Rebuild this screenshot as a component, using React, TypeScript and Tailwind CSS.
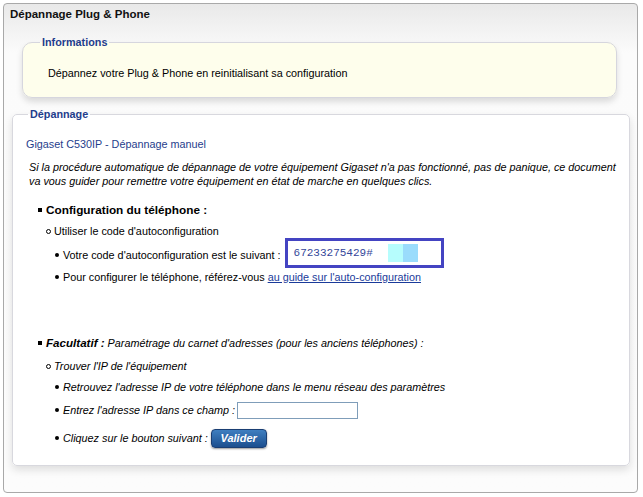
import React from "react";

export default function App() {
  return (
    <div className="w-[643px] h-[497px] bg-white pt-[3px] pl-[3px] font-['Liberation_Sans',Arial,sans-serif] text-[10.8px] text-black">
      <div className="w-[635px] h-[490px] rounded-[4px] border border-[#a9a9a9] bg-gradient-to-b from-[#e9e9e9] via-[#fbfbfb] via-[10%] to-[#fcfcfc]">
        <div className="h-[20px] pl-[6px] leading-[20px] text-[11.5px] font-bold text-[#111]">Dépannage Plug &amp; Phone</div>

        <fieldset className="ml-[18px] mt-[11px] w-[595px] rounded-[10px] border border-[#d6d6de] bg-[#fefeec] shadow-[0_4px_6px_rgba(0,0,0,0.13)]">
          <legend className="ml-[17px] px-[2px] h-[14px] leading-[14px] font-bold text-[#1f3d8c]">Informations</legend>
          <div className="pt-[17px] pb-[17px] pl-[25px] h-[48px] leading-[14px]">
            Dépannez votre Plug &amp; Phone en reinitialisant sa configuration
          </div>
        </fieldset>

        <fieldset className="ml-[8px] mt-[9px] w-[618px] h-[359px] rounded-[5px] border border-[#d8d8de] bg-white shadow-[0_4px_8px_rgba(0,0,0,0.12)]">
          <legend className="ml-[15px] px-[2px] h-[14px] leading-[14px] font-bold text-[#1f3d8c]">Dépannage</legend>
          <div className="pl-[13px] pt-[16px]">
            <div className="h-[14px] leading-[14px] text-[#1f3d8c]">Gigaset C530IP - Dépannage manuel</div>
            <p className="mt-[9px] pl-[3px] pr-[2px] italic leading-[14px]">
              Si la procédure automatique de dépannage de votre équipement Gigaset n'a pas fonctionné, pas de panique, ce document va vous guider pour remettre votre équipement en état de marche en quelques clics.
            </p>

            <div className="mt-[15px] pl-[12px]">
              <div className="flex h-[14px] items-center leading-[14px]">
                <span className="mr-[4px] inline-block h-[4px] w-[4px] bg-black" />
                <span className="text-[11.8px] font-bold">Configuration du téléphone :</span>
              </div>
              <div className="mt-[7px] flex h-[14px] items-center pl-[8px] leading-[14px]">
                <span className="mr-[3px] inline-block h-[5px] w-[5px] rounded-full border border-black" />
                <span>Utiliser le code d'autoconfiguration</span>
              </div>
              <div className="mt-[2px] flex h-[30px] items-center pl-[17px]">
                <span className="mr-[4px] inline-block h-[4px] w-[4px] rounded-full bg-black" />
                <span>Votre code d'autoconfiguration est le suivant :</span>
                <div className="ml-[4px] -mt-[4px] flex h-[30px] w-[159px] items-center border-[3px] border-[#4444c2] pl-[6px]">
                  <span className="font-['Liberation_Mono',monospace] text-[11px] text-[#35479a]">67233275429#</span>
                  <span className="ml-[15px] inline-block h-[18px] w-[15px] bg-[#b6fdfd]" />
                  <span className="inline-block h-[18px] w-[15px] bg-[#9adcfc]" />
                </div>
              </div>
              <div className="flex h-[14px] items-center pl-[17px] leading-[14px]">
                <span className="mr-[4px] inline-block h-[4px] w-[4px] rounded-full bg-black" />
                <span>
                  Pour configurer le téléphone, référez-vous{" "}
                  <a className="text-[#1a3b9a] underline" href="#">au guide sur l'auto-configuration</a>
                </span>
              </div>

              <div className="mt-[52px] flex h-[14px] items-center leading-[14px]">
                <span className="mr-[4px] inline-block h-[4px] w-[4px] bg-black" />
                <span className="italic">
                  <b className="text-[11.6px]">Facultatif :</b> Paramétrage du carnet d'adresses (pour les anciens téléphones) :
                </span>
              </div>
              <div className="mt-[9px] flex h-[14px] items-center pl-[8px] leading-[14px]">
                <span className="mr-[3px] inline-block h-[5px] w-[5px] rounded-full border border-black" />
                <span className="italic">Trouver l'IP de l'équipement</span>
              </div>
              <div className="mt-[7px] flex h-[14px] items-center pl-[17px] leading-[14px]">
                <span className="mr-[4px] inline-block h-[4px] w-[4px] rounded-full bg-black" />
                <span className="italic">Retrouvez l'adresse IP de votre téléphone dans le menu réseau des paramètres</span>
              </div>
              <div className="mt-[7px] flex h-[18px] items-center pl-[17px]">
                <span className="mr-[4px] inline-block h-[4px] w-[4px] rounded-full bg-black" />
                <span className="italic">Entrez l'adresse IP dans ce champ :</span>
                <input className="ml-[2px] h-[17px] w-[121px] border border-[#7f9db9] bg-white outline-none" />
              </div>
              <div className="mt-[9px] flex h-[20px] items-center pl-[17px]">
                <span className="mr-[4px] inline-block h-[4px] w-[4px] rounded-full bg-black" />
                <span className="italic">Cliquez sur le bouton suivant :</span>
                <button className="ml-[3px] h-[19px] w-[56px] rounded-[4px] border border-[#1a3e73] bg-gradient-to-b from-[#3f7fc0] to-[#1c4f8f] text-[11px] font-bold italic text-white shadow-[0_1px_2px_rgba(0,0,0,0.4)]">
                  Valider
                </button>
              </div>
            </div>
          </div>
        </fieldset>
      </div>
    </div>
  );
}
